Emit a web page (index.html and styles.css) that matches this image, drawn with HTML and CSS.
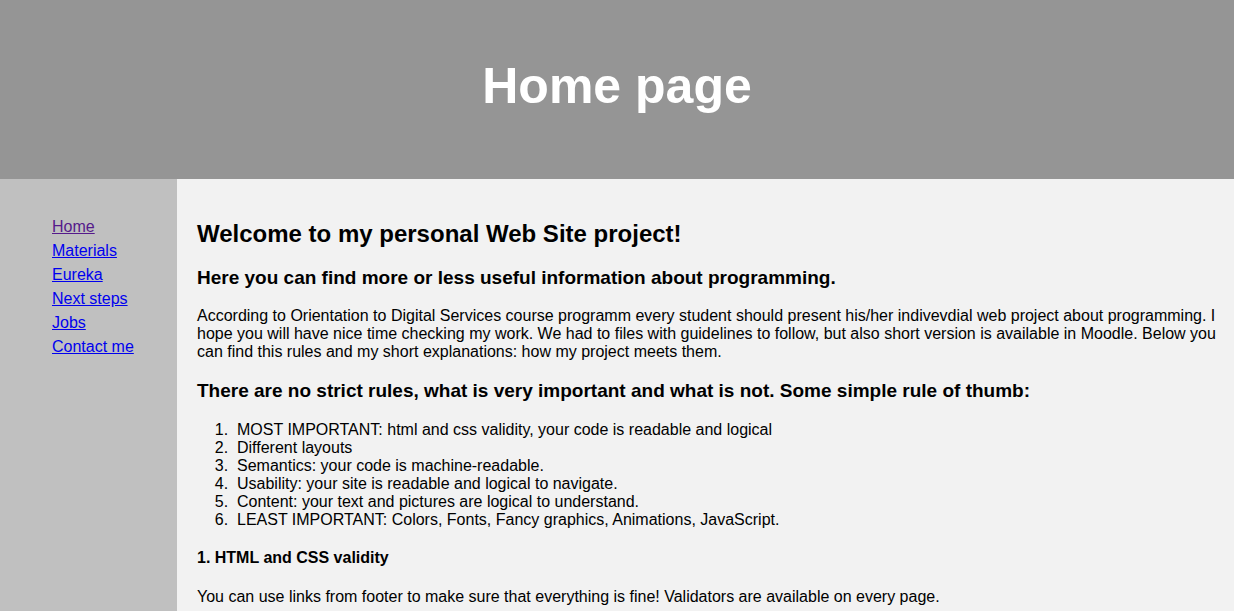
FILE: index.html
```html
<!DOCTYPE html>
<html lang="en">
<head>
<meta charset="utf-8">
<title>Home page</title>
<link rel="stylesheet" href="styles.css">
</head>
<body>
<header class="site-header">
  <h1 class="site-title">Home page</h1>
</header>
<div class="layout">
  <nav class="sidebar">
    <ul class="nav-list">
      <li><a class="visited" href="#home">Home</a></li>
      <li><a href="#materials">Materials</a></li>
      <li><a href="#eureka">Eureka</a></li>
      <li><a href="#next">Next steps</a></li>
      <li><a href="#jobs">Jobs</a></li>
      <li><a href="#contact">Contact me</a></li>
    </ul>
  </nav>
  <main class="content">
    <h2 class="title">Welcome to my personal Web Site project!</h2>
    <h3 class="subtitle">Here you can find more or less useful information about programming.</h3>
    <p class="text">According to Orientation to Digital Services course programm every student should present his/her indivevdial web project about programming. I hope you will have nice time checking my work. We had to files with guidelines to follow, but also short version is available in Moodle. Below you can find this rules and my short explanations: how my project meets them.</p>
    <h3 class="subtitle">There are no strict rules, what is very important and what is not. Some simple rule of thumb:</h3>
    <ol class="rules">
      <li>MOST IMPORTANT: html and css validity, your code is readable and logical</li>
      <li>Different layouts</li>
      <li>Semantics: your code is machine-readable.</li>
      <li>Usability: your site is readable and logical to navigate.</li>
      <li>Content: your text and pictures are logical to understand.</li>
      <li>LEAST IMPORTANT: Colors, Fonts, Fancy graphics, Animations, JavaScript.</li>
    </ol>
    <h4 class="section">1. HTML and CSS validity</h4>
    <p class="text">You can use links from footer to make sure that everything is fine! Validators are available on every page.</p>
  </main>
</div>
</body>
</html>
```

FILE: styles.css
```css
html, body {
  margin: 0;
  padding: 0;
}

body {
  font-family: "Liberation Sans", Arial, sans-serif;
  font-size: 16px;
  line-height: 18px;
  color: #000;
  background: #f2f2f2;
}

.site-header {
  height: 179px;
  background: #959595;
  display: flex;
  align-items: center;
  justify-content: center;
  box-sizing: border-box;
  padding-bottom: 7px;
}

.site-title {
  margin: 0;
  color: #fff;
  font-size: 50px;
  line-height: 57px;
  font-weight: bold;
}

.layout {
  display: flex;
  min-height: 432px;
}

.sidebar {
  width: 177px;
  flex: 0 0 177px;
  background: #c0c0c0;
  padding: 20px 0 0 12px;
  box-sizing: border-box;
}

.nav-list {
  list-style: none;
  margin: 16px 0;
  padding: 0 0 0 40px;
}

.nav-list li {
  line-height: 24px;
}

.nav-list a {
  color: #0000ee;
}

.nav-list a.visited {
  color: #551a8b;
}

.content {
  flex: 1;
  padding: 25px 16px 0 20px;
  min-width: 0;
}

.title {
  font-size: 24px;
  line-height: 28px;
  margin: 16px 0;
}

.subtitle {
  font-size: 19px;
  line-height: 22px;
  margin: 18.72px 0;
}

.text {
  margin: 16.5px 0;
}

.rules {
  margin: 16px 0;
  padding-left: 40px;
}

.rules li::marker {
  content: counter(list-item) ".  ";
}

.section {
  font-size: 16px;
  line-height: 18px;
  margin: 20.5px 0;
}
```
